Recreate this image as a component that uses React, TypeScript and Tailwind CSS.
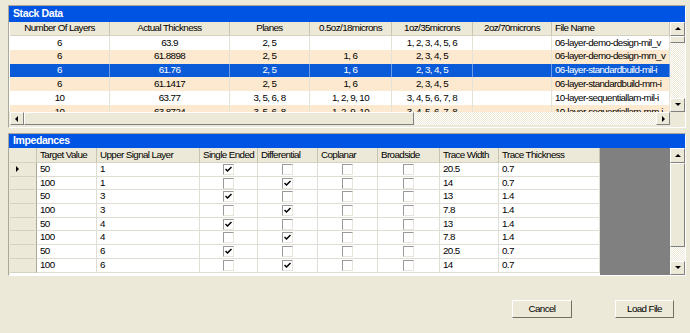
import React from "react";

const topCols = [100, 120, 80, 82, 81, 79, 118];
const topHeaders = ["Number Of Layers", "Actual Thickness", "Planes", "0.5oz/18microns", "1oz/35microns", "2oz/70microns", "File Name"];
const topRows = [
  ["6", "63.9", "2, 5", "", "1, 2, 3, 4, 5, 6", "", "06-layer-demo-design-mil_v"],
  ["6", "61.8898", "2, 5", "1, 6", "2, 3, 4, 5", "", "06-layer-demo-design-mm_v"],
  ["6", "61.76", "2, 5", "1, 6", "2, 3, 4, 5", "", "06-layer-standardbuild-mil-i"],
  ["6", "61.1417", "2, 5", "1, 6", "2, 3, 4, 5", "", "06-layer-standardbuild-mm-i"],
  ["10", "63.77", "3, 5, 6, 8", "1, 2, 9, 10", "3, 4, 5, 6, 7, 8", "", "10-layer-sequentiallam-mil-i"],
  ["10", "63.8724", "3, 5, 6, 8", "1, 2, 9, 10", "3, 4, 5, 6, 7, 8", "", "10-layer-sequentiallam-mm-i"],
];

const botCols = [60, 103, 58, 60, 60, 62, 59, 101];
const botHeaders = ["Target Value", "Upper Signal Layer", "Single Ended", "Differential", "Coplanar", "Broadside", "Trace Width", "Trace Thickness"];
const botRows: [string, string, boolean, string, string][] = [
  ["50", "1", true, "20.5", "0.7"],
  ["100", "1", false, "14", "0.7"],
  ["50", "3", true, "13", "1.4"],
  ["100", "3", false, "7.8", "1.4"],
  ["50", "4", true, "13", "1.4"],
  ["100", "4", false, "7.8", "1.4"],
  ["50", "6", true, "20.5", "0.7"],
  ["100", "6", false, "14", "0.7"],
];

const hatch = "bg-[repeating-conic-gradient(#ffffff_0_25%,#ECE9D8_0_50%)] bg-[length:2px_2px]";

const Arrow = ({ dir }: { dir: "up" | "down" | "left" | "right" }) => {
  const pts = {
    up: "1,5 4,2 7,5",
    down: "1,2 4,5 7,2",
    left: "5,1 2,4 5,7",
    right: "3,1 6,4 3,7",
  }[dir];
  return (
    <svg width="8" height="8" viewBox="0 0 8 8">
      <polygon points={pts} fill="#000" />
    </svg>
  );
};

const ScrollBtn = ({ dir, className = "" }: { dir: "up" | "down" | "left" | "right"; className?: string }) => (
  <div className={`flex items-center justify-center bg-[#ECE9D8] border border-t-white border-l-white border-r-[#808080] border-b-[#808080] ${className}`}>
    <Arrow dir={dir} />
  </div>
);

const Thumb = ({ className = "" }: { className?: string }) => (
  <div className={`bg-[#ECE9D8] border border-t-white border-l-white border-r-[#808080] border-b-[#808080] ${className}`} />
);

const CheckBox = ({ checked }: { checked: boolean }) => (
  <div className="w-[11px] h-[11px] bg-white border border-t-[#9A9A9A] border-l-[#9A9A9A] border-r-[#E8E6DC] border-b-[#E8E6DC] flex items-center justify-center">
    {checked && (
      <svg width="7" height="7" viewBox="0 0 7 7">
        <path d="M0.5 3 L2.5 5 L6.5 1" stroke="#000" strokeWidth="1.5" fill="none" />
      </svg>
    )}
  </div>
);

const TitleBar = ({ title, h }: { title: string; h: string }) => (
  <div className={`${h} bg-[#0054E3] text-white font-bold text-[10.5px] tracking-[-0.4px] pl-[4px] flex items-center`}>
    {title}
  </div>
);

const cell = "h-full whitespace-nowrap overflow-hidden flex items-center";

export default function App() {
  return (
    <div className="w-[690px] h-[333px] bg-[#ECE9D8] pt-[5px] pl-[8px] font-['Liberation_Sans',Arial,sans-serif] text-[9.8px] tracking-[-0.6px] text-black overflow-hidden">
      {/* Stack Data */}
      <div className="w-[678px] h-[123px] border border-[#ACA899] border-r-white border-b-white flex flex-col">
        <TitleBar title="Stack Data" h="h-[16px]" />
        <div className="flex h-[90px]">
          <div className="w-[661px] pl-[1px] flex flex-col bg-white overflow-hidden">
            <div className="flex h-[14px] bg-[#ECE9D8] shrink-0">
              {topHeaders.map((hd, i) => (
                <div
                  key={i}
                  style={{ width: topCols[i] }}
                  className={`${cell} border-r border-r-[#C7C5B2] border-b border-b-[#D6D2C2] ${i === 6 ? "pl-[3px]" : "justify-center"}`}
                >
                  {hd}
                </div>
              ))}
            </div>
            {topRows.map((row, r) => {
              const sel = r === 2;
              const bg = sel ? "bg-[#0B5BD8] text-white" : r % 2 ? "bg-[#FCE9CF]" : "bg-white";
              return (
                <div key={r} className={`flex h-[13.8px] shrink-0 ${bg}`}>
                  {row.map((c, i) => (
                    <div
                      key={i}
                      style={{ width: topCols[i] }}
                      className={`${cell} border-r ${sel ? "border-r-[#6C98E6]" : "border-r-[#E4E1D6]"} ${i === 6 ? "pl-[3px]" : "justify-center"}`}
                    >
                      {c}
                    </div>
                  ))}
                </div>
              );
            })}
          </div>
          <div className="w-[15px] flex flex-col">
            <ScrollBtn dir="up" className="h-[14px]" />
            <Thumb className="h-[7px]" />
            <div className={`flex-1 ${hatch}`} />
            <ScrollBtn dir="down" className="h-[14px]" />
          </div>
        </div>
        <div className="flex h-[13px] pl-[1px]">
          <ScrollBtn dir="left" className="w-[14px]" />
          <Thumb className="w-[390px]" />
          <div className={`w-[242px] ${hatch}`} />
          <ScrollBtn dir="right" className="w-[14px]" />
        </div>
      </div>

      {/* Impedances */}
      <div className="mt-[5px] w-[678px] h-[143px] border border-[#ACA899] border-r-white border-b-white flex flex-col">
        <TitleBar title="Impedances" h="h-[14px]" />
        <div className="flex flex-1 overflow-hidden">
          <div className="w-[661px] pl-[1px] flex overflow-hidden">
            <div className="flex flex-col bg-white">
              <div className="flex h-[15px] bg-[#ECE9D8] shrink-0">
                <div className="w-[27px] h-full border-r border-r-[#C7C5B2] border-b border-b-[#D6D2C2]" />
                {botHeaders.map((hd, i) => (
                  <div
                    key={i}
                    style={{ width: botCols[i] }}
                    className={`${cell} border-r border-r-[#C7C5B2] border-b border-b-[#D6D2C2] pl-[3px]`}
                  >
                    {hd}
                  </div>
                ))}
              </div>
              {botRows.map(([tv, layer, se, tw, tt], r) => (
                <div key={r} className="flex h-[13.7px] shrink-0">
                  <div className="w-[27px] h-full bg-[#ECE9D8] border-r border-r-[#ACA899] border-b border-b-[#D6D2C2] flex items-center pl-[3px]">
                    {r === 0 && <Arrow dir="right" />}
                  </div>
                  <div style={{ width: botCols[0] }} className={`${cell} border-r border-b border-[#E0DED4] pl-[3px]`}>{tv}</div>
                  <div style={{ width: botCols[1] }} className={`${cell} border-r border-b border-[#E0DED4] pl-[3px]`}>{layer}</div>
                  <div style={{ width: botCols[2] }} className={`${cell} border-r border-b border-[#E0DED4] justify-center`}><CheckBox checked={se} /></div>
                  <div style={{ width: botCols[3] }} className={`${cell} border-r border-b border-[#E0DED4] justify-center`}><CheckBox checked={!se} /></div>
                  <div style={{ width: botCols[4] }} className={`${cell} border-r border-b border-[#E0DED4] justify-center`}><CheckBox checked={false} /></div>
                  <div style={{ width: botCols[5] }} className={`${cell} border-r border-b border-[#E0DED4] justify-center`}><CheckBox checked={false} /></div>
                  <div style={{ width: botCols[6] }} className={`${cell} border-r border-b border-[#E0DED4] pl-[3px]`}>{tw}</div>
                  <div style={{ width: botCols[7] }} className={`${cell} border-r border-b border-[#E0DED4] pl-[3px]`}>{tt}</div>
                </div>
              ))}
            </div>
            <div className="flex-1 bg-[#808080]" />
          </div>
          <div className="w-[15px] flex flex-col">
            <ScrollBtn dir="up" className="h-[15px]" />
            <Thumb className="h-[84px]" />
            <div className={`flex-1 ${hatch}`} />
            <ScrollBtn dir="down" className="h-[14px]" />
          </div>
        </div>
      </div>

      {/* Buttons */}
      <div className="flex justify-end w-[666px] mt-[24px] gap-[43px]">
        <button className="w-[60px] h-[18px] bg-[#ECE9D8] border border-t-white border-l-white border-r-[#716F64] border-b-[#716F64] flex items-center justify-center">
          Cancel
        </button>
        <button className="w-[59px] h-[18px] bg-[#ECE9D8] border border-t-white border-l-white border-r-[#716F64] border-b-[#716F64] flex items-center justify-center">
          Load File
        </button>
      </div>
    </div>
  );
}
